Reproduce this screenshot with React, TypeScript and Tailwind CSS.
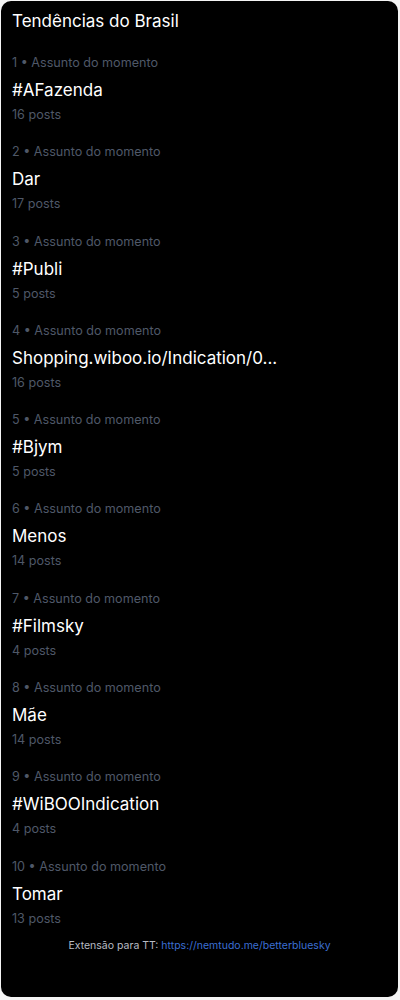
const trends = [
  { title: "#AFazenda", posts: 16 },
  { title: "Dar", posts: 17 },
  { title: "#Publi", posts: 5 },
  { title: "Shopping.wiboo.io/Indication/0...", posts: 16 },
  { title: "#Bjym", posts: 5 },
  { title: "Menos", posts: 14 },
  { title: "#Filmsky", posts: 4 },
  { title: "Mãe", posts: 14 },
  { title: "#WiBOOIndication", posts: 4 },
  { title: "Tomar", posts: 13 },
];

export default function App() {
  return (
    <div className="bg-[#f4f4f4] w-[400px] h-[1000px] p-px font-['Inter',sans-serif]">
      <div className="bg-black rounded-[10px] h-[996px] w-[397px] px-[11px] pt-[10px]">
        <h1 className="text-white text-[17px] leading-[20px]">Tendências do Brasil</h1>

        <div className="mt-[22px] flex flex-col">
          {trends.map((t, i) => (
            <div key={t.title} className="h-[89.3px]">
              <p className="text-[#4f5868] text-[12.6px] leading-[20px]">
                {i + 1} • Assunto do momento
              </p>
              <p className="text-white text-[17px] leading-[24px] mt-[5px] whitespace-nowrap">
                {t.title}
              </p>
              <p className="text-[#4f5868] text-[12.6px] leading-[20px] mt-[3px]">
                {t.posts} posts
              </p>
            </div>
          ))}
        </div>

        <p className="text-center text-[10.5px] leading-[16px] text-[#b8bcc4] -mt-[8px]">
          Extensão para TT:{" "}
          <a href="#" className="text-[#3b6fd4]">
            https://nemtudo.me/betterbluesky
          </a>
        </p>
      </div>
    </div>
  );
}
